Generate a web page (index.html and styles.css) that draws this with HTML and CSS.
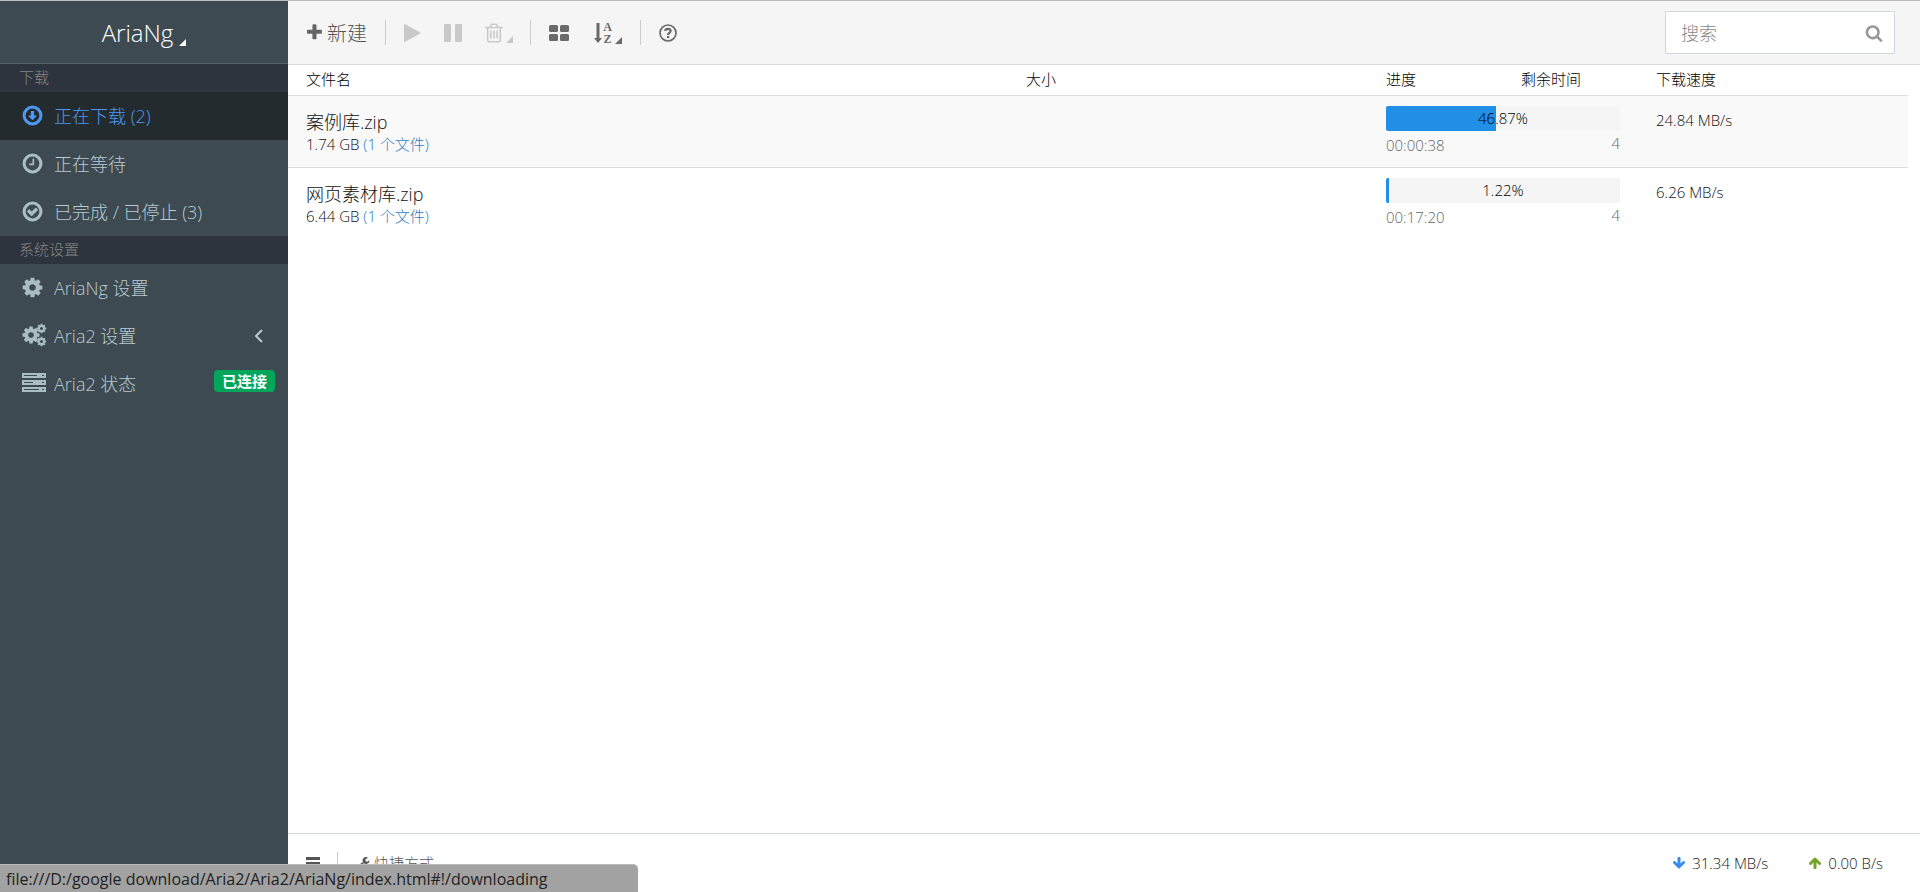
FILE: index.html
```html
<!DOCTYPE html>
<html lang="zh-CN">
<head>
<meta charset="utf-8">
<title>AriaNg</title>
<link rel="stylesheet" href="styles.css">
</head>
<body>
<svg class="sprite" aria-hidden="true">
  <symbol id="plus" viewBox="0 0 1792 1792"><path d="M1600 736v192q0 40-28 68t-68 28h-416v416q0 40-28 68t-68 28h-192q-40 0-68-28t-28-68v-416h-416q-40 0-68-28t-28-68v-192q0-40 28-68t68-28h416v-416q0-40 28-68t68-28h192q40 0 68 28t28 68v416h416q40 0 68 28t28 68z"/></symbol>
  <symbol id="ring" viewBox="0 0 1792 1792"><circle cx="896" cy="896" r="656" fill="none" stroke="currentColor" stroke-width="240"/></symbol>
  <symbol id="cog" viewBox="0 0 1792 1792"><path d="M1152 896q0-106-75-181t-181-75-181 75-75 181 75 181 181 75 181-75 75-181zm512-109v222q0 12-8 23t-20 13l-185 28q-19 54-39 91 35 50 107 138 10 12 10 25t-9 23q-27 37-99 108t-94 71q-12 0-26-9l-138-108q-44 23-91 38-16 136-29 186-7 28-36 28h-222q-14 0-24.5-8.5t-11.5-21.5l-28-184q-49-16-90-37l-141 107q-10 9-25 9-14 0-25-11-126-114-165-168-7-10-7-23 0-12 8-23 15-21 51-66.5t54-70.5q-27-50-41-99l-183-27q-13-2-21-12.5t-8-23.5v-222q0-12 8-23t19-13l186-28q14-46 39-92-40-57-107-138-10-12-10-24 0-10 9-23 26-36 98.5-107.5t94.5-71.5q13 0 26 10l138 107q44-23 91-38 16-136 29-186 7-28 36-28h222q14 0 24.5 8.5t11.5 21.5l28 184q49 16 90 37l142-107q9-9 24-9 13 0 25 10 129 119 165 170 7 8 7 22 0 12-8 23-15 21-51 66.5t-54 70.5q26 50 41 98l183 28q13 2 21 12.5t8 23.5z"/></symbol>
  <symbol id="arrow" viewBox="0 0 1792 1792"><path d="M1675 832q0 53-37 90l-651 652q-39 37-91 37-53 0-90-37l-651-652q-38-36-38-90 0-53 38-91l74-75q39-37 91-37 53 0 90 37l294 294v-704q0-52 38-90t90-38h128q52 0 90 38t38 90v704l294-294q37-37 90-37 52 0 91 37l75 75q37 39 37 91z"/></symbol>
</svg>
<div class="app">
  <aside class="sidebar">
    <button class="brand" type="button"><span>AriaNg</span><i class="caret"></i></button>
    <nav class="menu">
      <h2 class="menu-head">下载</h2>
      <a class="item active" href="#downloading"><svg class="nav-icon" viewBox="0 0 1792 1792"><use href="#ring"/><path d="M1216 928q0 14-10 24l-287 287q-11 9-23 9t-23-9l-287-287q-15-16-7-35 8-20 30-20h159v-321q0-14 9-23t23-9h192q14 0 23 9t9 23v321h160q14 0 23 9t9 22z"/></svg><span>正在下载 (2)</span></a>
      <a class="item" href="#waiting"><svg class="nav-icon" viewBox="0 0 1792 1792"><use href="#ring"/><path d="M1024 544v448q0 14-9 23t-23 9h-320q-14 0-23-9t-9-23v-64q0-14 9-23t23-9h224v-352q0-14 9-23t23-9h64q14 0 23 9t9 23z"/></svg><span>正在等待</span></a>
      <a class="item" href="#stopped"><svg class="nav-icon" viewBox="0 0 1792 1792"><use href="#ring"/><path d="M1299 813l-422 422q-19 19-45 19t-45-19l-294-294q-19-19-19-45t19-45l102-102q19-19 45-19t45 19l147 147 275-275q19-19 45-19t45 19l102 102q19 19 19 45t-19 45z"/></svg><span>已完成 / 已停止 (3)</span></a>
      <h2 class="menu-head">系统设置</h2>
      <a class="item" href="#settings"><svg class="nav-icon" viewBox="0 0 1792 1792"><use href="#cog"/></svg><span>AriaNg 设置</span></a>
      <a class="item" href="#aria2"><svg class="nav-icon wide" viewBox="0 0 26 24"><use href="#cog" x="0" y="2" width="20" height="20"/><use href="#cog" x="15" y="0" width="11" height="11"/><use href="#cog" x="15" y="13" width="11" height="11"/></svg><span>Aria2 设置</span><svg class="angle" viewBox="0 0 9 14"><path d="M8 1L2 7l6 6" fill="none" stroke="currentColor" stroke-width="2"/></svg></a>
      <a class="item" href="#status"><svg class="nav-icon wide" viewBox="0 0 26 24"><path fill-rule="evenodd" d="M1 2h24v5H1zM3 4v1h13V4zM21 4v1h2V4zM1 9h24v5H1zM3 11v1h9v-1zM21 11v1h2v-1zM1 16h24v5H1zM3 18v1h15v-1zM21 18v1h2v-1z"/></svg><span>Aria2 状态</span><b class="badge">已连接</b></a>
    </nav>
  </aside>
  <main class="content">
    <header class="toolbar">
      <button class="tool new" type="button"><svg class="icon" viewBox="100 0 1600 1792"><use href="#plus" width="1792" height="1792"/></svg><span>新建</span></button>
      <div class="group control">
        <button class="tool" type="button" disabled aria-label="开始"><svg class="icon" viewBox="0 0 18 20"><path d="M1 1.500v17q0 .8.800.4l15.500-8.500q.6-.4 0-.8L1.800 1.100q-.8-.4-.8.400z"/></svg></button>
        <button class="tool" type="button" disabled aria-label="暂停"><svg class="icon" viewBox="0 0 18 20"><path d="M0 2q0-1 1-1h5q1 0 1 1v16q0 1-1 1H1q-1 0-1-1zM11 2q0-1 1-1h5q1 0 1 1v16q0 1-1 1h-5q-1 0-1-1z"/></svg></button>
        <button class="tool" type="button" disabled aria-label="删除"><svg class="icon" viewBox="190 90 1412 1612"><path d="M704 736v576q0 14-9 23t-23 9h-64q-14 0-23-9t-9-23v-576q0-14 9-23t23-9h64q14 0 23 9t9 23zm256 0v576q0 14-9 23t-23 9h-64q-14 0-23-9t-9-23v-576q0-14 9-23t23-9h64q14 0 23 9t9 23zm256 0v576q0 14-9 23t-23 9h-64q-14 0-23-9t-9-23v-576q0-14 9-23t23-9h64q14 0 23 9t9 23zm128 724v-948h-896v948q0 22 7 40.500t14.500 27 10.500 8.500h832q3 0 10.500-8.500t14.500-27 7-40.500zm-672-1076h448l-48-117q-7-9-17-11h-317q-10 2-17 11zm928 32v64q0 14-9 23t-23 9h-96v948q0 83-47 143.500t-113 60.500h-832q-66 0-113-58.500t-47-141.500v-952h-96q-14 0-23-9t-9-23v-64q0-14 9-23t23-9h309l70-167q15-37 54-63t79-26h320q40 0 79 26t54 63l70 167h309q14 0 23 9t9 23z"/></svg><i class="caret"></i></button>
      </div>
      <div class="group display">
        <button class="tool" type="button" aria-label="视图"><svg class="icon" viewBox="0 0 20 18"><path d="M1.500 1h6Q9 1 9 2.500v4Q9 8 7.500 8h-6Q0 8 0 6.500v-4Q0 1 1.500 1zM12.500 1h6Q20 1 20 2.500v4Q20 8 18.500 8h-6Q11 8 11 6.500v-4Q11 1 12.500 1zM1.500 10h6Q9 10 9 11.500v4Q9 17 7.500 17h-6Q0 17 0 15.500v-4Q0 10 1.500 10zM12.500 10h6q1.500 0 1.500 1.500v4q0 1.500-1.500 1.500h-6q-1.500 0-1.500-1.500v-4q0-1.500 1.500-1.500z"/></svg></button>
        <button class="tool" type="button" aria-label="排序"><svg class="icon" viewBox="0 0 20 22"><path d="M3.500 1h3v15H9l-4 5-4-5h2.500z"/><text x="14.500" y="9" class="az">A</text><text x="14.500" y="21" class="az">Z</text></svg><i class="caret"></i></button>
      </div>
      <div class="group help">
        <button class="tool" type="button" aria-label="帮助"><svg class="icon" viewBox="0 0 20 20"><g fill="none" stroke="currentColor"><circle cx="10" cy="10" r="8" stroke-width="1.700"/><path d="M7.200 8C7.500 5 12.600 5.200 12.600 8c0 1.800-2.600 1.800-2.600 4" stroke-width="2.200"/></g><path d="M9 13h2.200v2.200H9z"/></svg></button>
      </div>
      <label class="search"><input type="text" placeholder="搜索" aria-label="搜索"><svg viewBox="0 0 1792 1792"><path d="M1216 832q0-185-131.500-316.500t-316.500-131.500-316.500 131.500-131.500 316.500 131.500 316.500 316.500 131.500 316.500-131.500 131.500-316.500zm512 832q0 52-38 90t-90 38q-54 0-90-38l-343-342q-179 124-399 124-143 0-273.500-55.500t-225-150-150-225-55.500-273.500 55.500-273.500 150-225 225-150 273.500-55.500 273.500 55.500 225 150 150 225 55.500 273.500q0 220-124 399l343 343q37 37 37 90z"/></svg></label>
    </header>
    <section class="tasks">
      <div class="row head"><span>文件名</span><span>大小</span><span class="pair"><span>进度</span><span>剩余时间</span></span><span>下载速度</span></div>
      <div class="row task hover">
        <div><div class="name">案例库.zip</div><div class="sub">1.74 GB <a href="#files1">(1 个文件)</a></div></div>
        <div></div>
        <div><div class="progress"><div class="bar" style="width:46.87%"></div><span class="pct">46.87%</span></div><div class="meta"><span>00:00:38</span><span class="conn">4</span></div></div>
        <div class="speed">24.84 MB/s</div>
      </div>
      <div class="row task">
        <div><div class="name">网页素材库.zip</div><div class="sub">6.44 GB <a href="#files2">(1 个文件)</a></div></div>
        <div></div>
        <div><div class="progress"><div class="bar" style="width:1.22%"></div><span class="pct">1.22%</span></div><div class="meta"><span>00:17:20</span><span class="conn">4</span></div></div>
        <div class="speed">6.26 MB/s</div>
      </div>
    </section>
    <footer class="footer">
      <button class="foot-btn" type="button" aria-label="菜单"><svg viewBox="0 0 14 14"><path d="M0 1h14v3H0zM0 6h14v3H0zM0 11h14v3H0z"/></svg></button>
      <button class="foot-btn quick" type="button"><svg viewBox="0 0 1792 1792"><path d="M448 1472q0-26-19-45t-45-19-45 19-19 45 19 45 45 19 45-19 19-45zm644-420l-682 682q-37 37-90 37-52 0-91-37l-106-108q-38-36-38-90 0-53 38-91l681-681q39 98 114.500 173.500t173.500 114.500zm634-435q0 39-23 106-47 134-164.500 217.500t-258.500 83.500q-185 0-316.500-131.500t-131.500-316.500 131.500-316.500 316.500-131.500q58 0 121.500 16.500t107.500 46.500q16 11 16 28t-16 28l-293 169v224l193 107q5-3 79-48.500t135.500-81 70.500-35.500q15 0 23.500 10t8.500 25z"/></svg><span>快捷方式</span></button>
      <div class="rates"><span class="rate"><svg class="down"><use href="#arrow"/></svg>31.34 MB/s</span><span class="rate"><svg class="up"><use href="#arrow"/></svg>0.00 B/s</span></div>
    </footer>
  </main>
</div>
<div class="link-status">file:///D:/google download/Aria2/Aria2/AriaNg/index.html#!/downloading</div>
</body>
</html>
```

FILE: styles.css
```css
* { box-sizing: border-box; }
body {
  margin: 0;
  font-family: "Open Sans", "Noto Sans CJK SC", sans-serif;
  font-weight: 300;
  font-size: 15px;
  line-height: 22px;
  color: #111;
  background: #fff;
}
button { font: inherit; color: inherit; background: none; border: 0; padding: 0; }
a { color: #2f7dc0; text-decoration: none; }
svg { fill: currentColor; flex: none; }
.sprite { position: absolute; width: 0; height: 0; }

.app { display: grid; grid-template-columns: 15% minmax(0, 1fr); min-height: 100vh; border-top: 1px solid #bdbdbd; }
.caret { display: inline-block; border-left: 7px solid transparent; border-bottom: 7px solid currentColor; }

.sidebar { background: #3d4a52; color: #a9bdc2; }
.brand { display: flex; align-items: center; justify-content: center; gap: 6px; width: 100%; height: 63px; padding-top: 2px; border-bottom: 1px solid #566268; color: #fff; font-size: 24px; line-height: 62px; }
.brand .caret { margin-top: 19px; }
.menu-head { margin: 0; padding: 0 19px; height: 28px; font-size: 15px; font-weight: 300; line-height: 26px; color: #858585; background: #2e343d; }
.item { display: flex; align-items: center; height: 48px; padding: 0 13px 2px 22px; color: #b8cbd0; font-size: 18px; line-height: 46px; }
.item.active { background: #242b2e; color: #4c98f0; }
.item > span { padding-top: 2px; }
.nav-icon { width: 23px; height: 23px; margin: 0 10px 0 -1px; color: #a9bdc2; }
.active .nav-icon { color: inherit; }
.nav-icon.wide { width: 26px; height: 24px; margin-right: 7px; }
.angle { width: 9px; height: 14px; margin: 2px 12px 0 auto; }
.badge { margin: 0 0 4px auto; padding: 0 8px; border-radius: 4px; background: #00a65a; color: #fff; font-size: 15px; font-weight: 700; line-height: 22px; }

.content { display: flex; flex-direction: column; }
.toolbar { display: flex; align-items: center; height: 64px; padding: 0 25px 0 18px; background: #f5f5f5; border-bottom: 1px solid #d9d9d9; color: #6a6a6a; }
.tool { display: flex; align-items: center; font-size: 20px; }
.tool:disabled { color: #c9c9c9; }
.tool .caret { align-self: flex-end; }
.icon { width: 18px; height: 20px; }
.new { gap: 4px; padding-right: 18px; color: #555; }
.new span { padding-top: 2px; }
.new .icon { width: 17px; height: 19px; color: #666; }
.group { display: flex; align-items: center; height: 25px; padding: 0 17px; border-left: 1px solid #ccc; }
.control { gap: 23px; }
.control .caret { margin-left: 3px; }
.display { gap: 24px; padding: 0 18px; }
.display .icon { width: 20px; height: 22px; }
.display .caret { margin-left: 2px; }
.help .icon { width: 20px; }
.display svg { overflow: visible; }
.az { font: bold 12px "Liberation Serif", serif; text-anchor: middle; }
.search { display: flex; align-items: center; width: 230px; height: 43px; margin-left: auto; padding: 0 11px 0 15px; border: 1px solid #d2d6de; background: #fff; color: #999; }
.search input { flex: 1; min-width: 0; padding: 0; border: 0; outline: 0; background: none; font: inherit; font-size: 18px; }
.search input::placeholder { color: #888; }
.search svg { width: 18px; height: 18px; }

.tasks { flex: 1; padding-right: 12px; }
.row { display: grid; grid-template-columns: 8fr 4fr 3fr 3fr; border-bottom: 1px solid #ddd; }
.row > * { padding: 0 18px; }
.head { height: 31px; line-height: 28px; color: #000; }
.pair { display: grid; grid-template-columns: 117px 1fr; gap: 18px; }
.task { height: 72px; padding-top: 10px; }
.task:last-child { border: 0; }
.task.hover { background: #f9f9f9; }
.name { font-size: 18px; line-height: 32px; }
.sub { line-height: 12px; }
.progress { position: relative; height: 25px; border-radius: 2px; background: #f5f5f5; overflow: hidden; }
.bar { height: 100%; background: #208fe5; }
.pct { position: absolute; inset: 0; text-align: center; line-height: 25px; color: #000; }
.meta { display: flex; justify-content: space-between; color: #666; line-height: 29px; }
.conn { line-height: 24px; }
.speed { line-height: 28px; }

.footer { display: flex; align-items: center; height: 59px; padding: 0 37px 0 18px; border-top: 1px solid #d2d6de; color: #555; }
.foot-btn { display: flex; align-items: center; gap: 4px; }
.foot-btn svg { width: 14px; height: 14px; }
.quick { height: 22px; margin-left: 17px; padding-left: 18px; border-left: 1px solid #ccc; }
.rates { display: flex; gap: 40px; margin-left: auto; color: #222; }
.rate { display: flex; align-items: center; gap: 6px; }
.rate svg { width: 14px; height: 14px; }
.down { color: #3b8beb; }
.up { color: #74a329; transform: rotate(180deg); }

.link-status { position: fixed; left: 0; bottom: 0; width: 638px; height: 28px; padding-left: 6px; border-top: 1px solid #b8b8b8; border-top-right-radius: 5px; background: #a2a2a2; color: #222; font-size: 16px; font-weight: 400; line-height: 29px; }
```
